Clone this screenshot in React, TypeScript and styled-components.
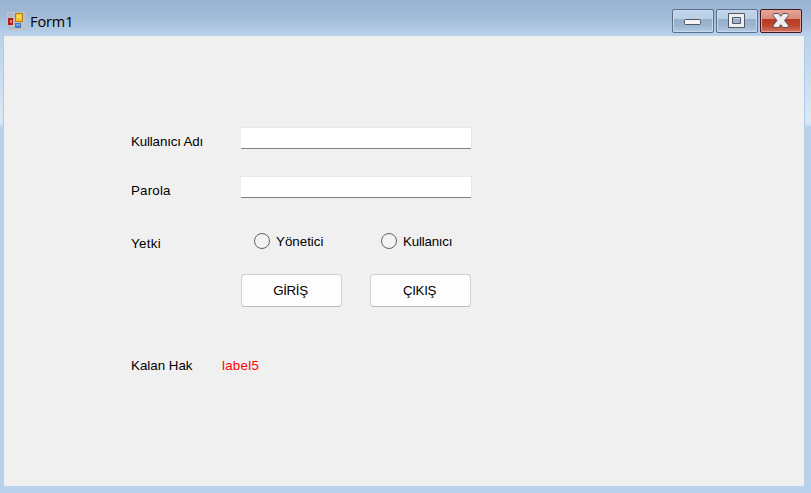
import React from 'react';
import styled, { createGlobalStyle } from 'styled-components';

const GlobalStyle = createGlobalStyle`
  *, *::before, *::after { box-sizing: border-box; }
  html, body { margin: 0; overflow: hidden; }
`;

const Window = styled.main`
  width: 811px;
  height: 493px;
  display: grid;
  grid-template: 36px 450px 7px / 4px 800px 7px;
  background: #b9d1ea;
  font: 13.33px/16px "Liberation Sans", Arial, sans-serif;
  color: #000;
`;

const TitleBar = styled.header`
  grid-column: 1 / -1;
  display: flex;
  align-items: flex-start;
  padding: 9px 9px 0 7px;
  background: linear-gradient(#99b4d1 0, #9fb9d6 40%, #b9d1ea 100%);
`;

const AppIcon = styled.svg`
  width: 18px;
  height: 18px;
  margin-top: 3px;
`;

const Title = styled.h1`
  margin: 3px auto 0 5px;
  font: 400 14.5px/20px "Open Sans", "Noto Sans", sans-serif;
  letter-spacing: -0.1px;
`;

const Controls = styled.div`
  display: flex;
  gap: 2px;
`;

const ControlButton = styled.button<{ $danger?: boolean }>`
  width: 42px;
  height: 24px;
  padding: 0;
  display: grid;
  place-items: center;
  border: 1px solid ${p => (p.$danger ? '#431422' : '#59708f')};
  border-radius: 2px;
  box-shadow: inset 0 0 0 1px ${p => (p.$danger ? '#e6a597' : '#c6d9ed')};
  background: ${p => p.$danger
    ? 'linear-gradient(#e6a597 0, #d88878 42%, #b73c23 43%, #bd452c 70%, #d27664 100%)'
    : 'linear-gradient(#c2d6eb 0, #b8cfe6 42%, #98b1cb 43%, #9bb5d0 70%, #b5cde6 100%)'};
`;

const Glyph = styled.svg`
  width: 20px;
  height: 18px;
  display: block;
`;

const SideFrame = styled.div<{ $right?: boolean }>`
  height: 90px;
  background: linear-gradient(#b9d1ea, #dce8f5 95%, #c9dcf0);
  border: 0 solid #aacbe9;
  border-width: ${p => (p.$right ? '0 0 0 1px' : '0 1px 0 0')};
`;

const Form = styled.form`
  padding: 92px 0 0 127px;
  background: #f0f0f0;
`;

const FieldRow = styled.div<{ $height: number }>`
  display: grid;
  grid-template-columns: 110px 230px;
  align-items: start;
  height: ${p => p.$height}px;
`;

const Label = styled.label<{ $top?: number; $spacing?: number }>`
  margin-top: ${p => p.$top ?? 6}px;
  letter-spacing: ${p => p.$spacing ?? 0}px;
  white-space: nowrap;
`;

const TextInput = styled.input`
  width: 230px;
  height: 21px;
  padding: 0 4px;
  border: 0;
  border-bottom: 1px solid #808080;
  border-radius: 0;
  background: #fff;
  box-shadow: 0 -1px #e9e9e9, 1px -1px #e6e6e6;
  outline: none;
`;

const Options = styled.div`
  display: grid;
  grid-template-columns: 127px auto;
  padding-left: 13px;
`;

const Option = styled.label`
  display: flex;
  align-items: flex-start;
  gap: 6px;
  height: 16px;
  white-space: nowrap;
`;

const OptionText = styled.span<{ $spacing?: number }>`
  margin-top: 1px;
  letter-spacing: ${p => p.$spacing ?? 0}px;
`;

const Radio = styled.input`
  appearance: none;
  flex: none;
  width: 16px;
  height: 16px;
  margin: 0;
  border: 1px solid #626262;
  border-radius: 50%;
  background: #f3f3f3;
`;

const Actions = styled.div`
  display: flex;
  gap: 28px;
  height: 84px;
  margin-left: 110px;
`;

const Button = styled.button`
  width: 101px;
  height: 33px;
  padding: 0 2px 0 0;
  border: 1px solid #d0d0d0;
  border-bottom-color: #bababa;
  border-radius: 4px;
  background: #fdfdfd;
  color: #000;
  font: inherit;
  letter-spacing: -0.35px;
`;

const Status = styled.div`
  display: grid;
  grid-template-columns: 91px auto;
`;

const Remaining = styled.output`
  color: #f00;
  letter-spacing: 0.25px;
`;

export default function App() {
  return (
    <>
      <GlobalStyle />
      <Window>
        <TitleBar>
          <AppIcon viewBox="0 0 18 18" shapeRendering="crispEdges">
            <path d="M0 0h18v18H0z" fill="#bfc1c4" />
            <path d="M1 1h6v4H1zM1 14h6v3H1z" fill="#adbdd0" />
            <path d="M1 6h5v7H1z" fill="#b51d12" />
            <path d="M3 8h2v3H3z" fill="#dd7f70" />
            <path d="M8 1h8v9H8z" fill="#b67b12" />
            <path d="M9 2h6v7H9z" fill="#f5c431" />
            <path d="M10 3h4v3h-4z" fill="#ffdc68" />
            <path d="M8 11h6v5H8z" fill="#3d77c9" />
            <path d="M9 12h4v2H9z" fill="#75a6ed" />
          </AppIcon>
          <Title>Form1</Title>
          <Controls>
            <ControlButton type="button" aria-label="Minimize">
              <Glyph viewBox="0 0 20 18">
                <rect x="1.5" y="7.5" width="16" height="5" rx="1" fill="#f4f4f4" stroke="#535666" />
              </Glyph>
            </ControlButton>
            <ControlButton type="button" aria-label="Maximize">
              <Glyph viewBox="0 0 20 18">
                <path d="M1.5 1.5h16v14h-16zM5.5 5.5v6h8v-6z" fill="#eee" fillRule="evenodd" stroke="#535666" />
              </Glyph>
            </ControlButton>
            <ControlButton type="button" aria-label="Close" $danger>
              <Glyph viewBox="0 0 20 18">
                <path d="M3 1.5h4.5l2.2 2.8 2.3-2.8h4.5l1 2-4 5 4 5-1 2H12l-2.3-2.8-2.2 2.8H3l-1-2 4-5-4-5z" fill="#eee" stroke="#535666" strokeLinejoin="round" />
              </Glyph>
            </ControlButton>
          </Controls>
        </TitleBar>
        <SideFrame />
        <Form>
          <FieldRow $height={49}>
            <Label htmlFor="user" $spacing={-0.15}>Kullanıcı Adı</Label>
            <TextInput id="user" />
          </FieldRow>
          <FieldRow $height={56}>
            <Label htmlFor="password" $spacing={0.2}>Parola</Label>
            <TextInput id="password" type="password" />
          </FieldRow>
          <FieldRow $height={41}>
            <Label as="span" $top={3} $spacing={0.3}>Yetki</Label>
            <Options>
              <Option><Radio type="radio" name="role" /><OptionText>Yönetici</OptionText></Option>
              <Option><Radio type="radio" name="role" /><OptionText $spacing={-0.2}>Kullanıcı</OptionText></Option>
            </Options>
          </FieldRow>
          <Actions>
            <Button type="button">GİRİŞ</Button>
            <Button type="button">ÇIKIŞ</Button>
          </Actions>
          <Status>
            <span>Kalan Hak</span>
            <Remaining>label5</Remaining>
          </Status>
        </Form>
        <SideFrame $right />
      </Window>
    </>
  );
}
